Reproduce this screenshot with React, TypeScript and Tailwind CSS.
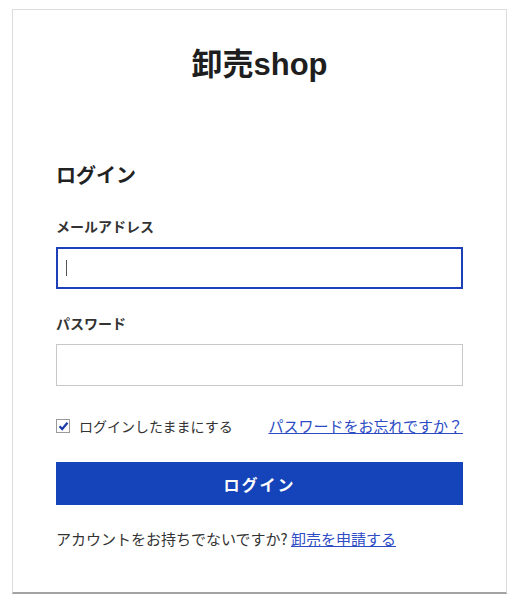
import React from "react";

export default function App() {
  const font = { fontFamily: '"Noto Sans CJK JP", "Noto Sans", sans-serif' };
  const titleFont = { fontFamily: '"Liberation Sans", "Noto Sans CJK JP", sans-serif' };
  return (
    <div className="bg-white w-[513px] h-[600px] pt-[9px] pl-[12px]" style={font}>
      <div className="w-[495px] h-[585px] border-l border-t border-r border-[#dcdcdc] border-b-2 border-b-[#a3a3a3] pt-[37px] px-[43px] flex flex-col">
        <h1 className="text-[31px] leading-[36px] font-bold text-center text-[#1e1e1e]" style={titleFont}>卸売shop</h1>
        <h2 className="mt-[78px] text-[20px] leading-[28px] font-bold text-[#222]">ログイン</h2>
        <label className="mt-[27px] text-[14px] leading-[20px] font-bold text-[#333]">メールアドレス</label>
        <div className="mt-[11px] h-[42px] border-2 border-[#1d3fb8] flex items-center pl-[8px]">
          <div className="w-[1px] h-[16px] bg-[#555]" />
        </div>
        <label className="mt-[24px] text-[14px] leading-[20px] font-bold text-[#333]">パスワード</label>
        <div className="mt-[11px] h-[42px] border border-[#c8c8c8]" />
        <div className="mt-[30px] h-[20px] flex items-center justify-between">
          <div className="flex items-center">
            <div className="w-[14px] h-[14px] border border-[#9a9a9a] bg-white flex items-center justify-center">
              <svg width="11" height="10" viewBox="0 0 11 10">
                <path d="M1.5 5.2 L4.2 8 L9.5 1.8" fill="none" stroke="#1a3aa8" strokeWidth="2.2" />
              </svg>
            </div>
            <span className="ml-[9px] text-[14px] text-[#333]">ログインしたままにする</span>
          </div>
          <a className="text-[15px] text-[#2c4bc4] underline">パスワードをお忘れですか？</a>
        </div>
        <button className="mt-[26px] h-[43px] bg-[#1543b9] text-white text-[16px] tracking-[2px] font-bold">ログイン</button>
        <p className="mt-[24px] text-[15px] leading-[20px] text-[#333]">
          アカウントをお持ちでないですか? <a className="text-[#2c4bc4] underline">卸売を申請する</a>
        </p>
      </div>
    </div>
  );
}
